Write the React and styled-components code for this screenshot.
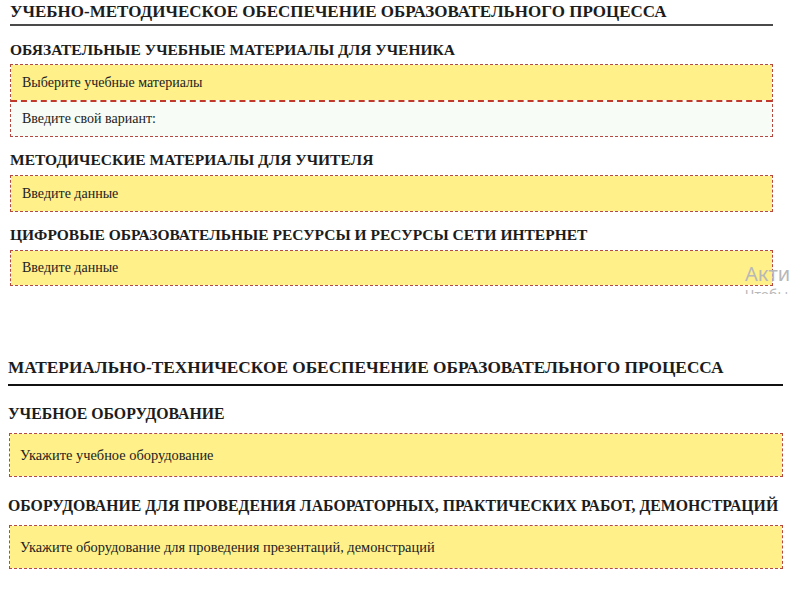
import React from "react";
import styled, { createGlobalStyle } from "styled-components";

const Global = createGlobalStyle`
  html, body { margin: 0; padding: 0; background: #fff; }
  body { font-family: "Liberation Serif", "Times New Roman", serif; color: #1a1a1a; }
`;

const Page = styled.div`
  display: flex;
  flex-direction: column;
  width: 800px;
`;

const Shot = styled.section`
  position: relative;
  overflow: hidden;
  width: ${(p) => p.$w}px;
  height: ${(p) => p.$h}px;
  margin-bottom: ${(p) => p.$mb || 0}px;
  padding: ${(p) => p.$pad};
  box-sizing: border-box;
  display: flex;
  flex-direction: column;
`;

const Title = styled.h1`
  margin: 0;
  font-size: ${(p) => p.$size}px;
  font-weight: bold;
  line-height: ${(p) => p.$lh}px;
  color: #1c1c1c;
  white-space: nowrap;
  border-bottom: ${(p) => p.$rule};
  padding-bottom: ${(p) => p.$pb}px;
`;

const Sub = styled.h2`
  margin: ${(p) => p.$mt}px 0 ${(p) => p.$mb}px;
  font-size: ${(p) => p.$size}px;
  font-weight: bold;
  line-height: ${(p) => p.$lh}px;
  color: #1c1c1c;
  white-space: nowrap;
`;

const Box = styled.div`
  display: flex;
  flex-direction: column;
  border: 1px dashed #b5483f;
  ${(p) => p.$indent && `margin-left: ${p.$indent}px;`}
`;

const Row = styled.div`
  height: ${(p) => p.$h}px;
  display: flex;
  align-items: center;
  padding-left: ${(p) => p.$pl}px;
  font-size: ${(p) => p.$size}px;
  color: #222;
  background: ${(p) => (p.$light ? "#f7fcf6" : "#fff08a")};
  ${(p) => p.$divider && `border-top: 2px dashed #c0392b;`}
`;

const Watermark = styled.div`
  position: absolute;
  left: 745px;
  top: ${(p) => p.$top}px;
  font-family: "Noto Sans", "Open Sans", sans-serif;
  font-size: ${(p) => p.$size}px;
  line-height: 1;
  color: #b8b8b8;
  white-space: nowrap;
`;

export default function App() {
  return (
    <Page>
      <Global />
      <Shot $w={790} $h={294} $mb={46} $pad="4px 17px 0 10px">
        <Title $size={17} $lh={16} $pb={4} $rule="2px solid #4a4a4a">
          УЧЕБНО-МЕТОДИЧЕСКОЕ ОБЕСПЕЧЕНИЕ ОБРАЗОВАТЕЛЬНОГО ПРОЦЕССА
        </Title>
        <Sub $size={15.5} $lh={18} $mt={15} $mb={5}>
          ОБЯЗАТЕЛЬНЫЕ УЧЕБНЫЕ МАТЕРИАЛЫ ДЛЯ УЧЕНИКА
        </Sub>
        <Box>
          <Row $h={35} $pl={11} $size={14}>Выберите учебные материалы</Row>
          <Row $h={34} $pl={11} $size={14} $light $divider>
            Введите свой вариант:
          </Row>
        </Box>
        <Sub $size={15.5} $lh={18} $mt={14} $mb={6}>
          МЕТОДИЧЕСКИЕ МАТЕРИАЛЫ ДЛЯ УЧИТЕЛЯ
        </Sub>
        <Box>
          <Row $h={35} $pl={11} $size={14}>Введите данные</Row>
        </Box>
        <Sub $size={15.5} $lh={18} $mt={14} $mb={6}>
          ЦИФРОВЫЕ ОБРАЗОВАТЕЛЬНЫЕ РЕСУРСЫ И РЕСУРСЫ СЕТИ ИНТЕРНЕТ
        </Sub>
        <Box>
          <Row $h={34} $pl={11} $size={14}>Введите данные</Row>
        </Box>
        <Watermark $top={264} $size={20}>Активация Windows</Watermark>
        <Watermark $top={288} $size={14}>Чтобы активировать Windows</Watermark>
      </Shot>
      <Shot $w={800} $h={260} $pad="19px 17px 0 8px">
        <Title $size={17.3} $lh={18} $pb={7} $rule="2px solid #111">
          МАТЕРИАЛЬНО-ТЕХНИЧЕСКОЕ ОБЕСПЕЧЕНИЕ ОБРАЗОВАТЕЛЬНОГО ПРОЦЕССА
        </Title>
        <Sub $size={15.8} $lh={18} $mt={19} $mb={10}>
          УЧЕБНОЕ ОБОРУДОВАНИЕ
        </Sub>
        <Box $indent={1}>
          <Row $h={42} $pl={10} $size={14.4}>Укажите учебное оборудование</Row>
        </Box>
        <Sub $size={15.8} $lh={18} $mt={20} $mb={10}>
          ОБОРУДОВАНИЕ ДЛЯ ПРОВЕДЕНИЯ ЛАБОРАТОРНЫХ, ПРАКТИЧЕСКИХ РАБОТ, ДЕМОНСТРАЦИЙ
        </Sub>
        <Box $indent={1}>
          <Row $h={42} $pl={10} $size={14.4}>
            Укажите оборудование для проведения презентаций, демонстраций
          </Row>
        </Box>
      </Shot>
    </Page>
  );
}
